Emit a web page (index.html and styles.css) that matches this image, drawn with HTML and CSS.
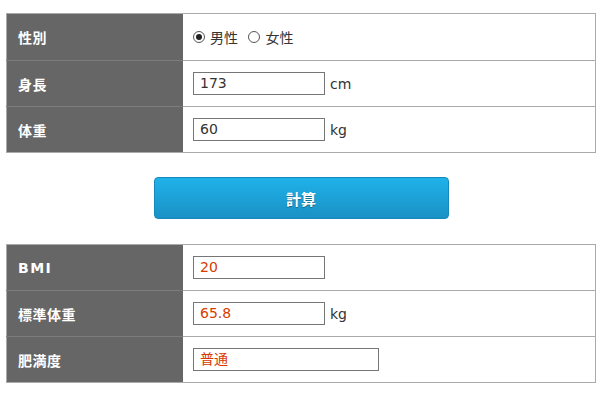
FILE: index.html
```html
<!DOCTYPE html>
<html lang="ja">
<head>
    <meta charset="UTF-8">
    <meta name="viewport" content="width=device-width, initial-scale=1.0">
    <title>BMI計算</title>
    <link rel="stylesheet" href="styles.css">
</head>
<body>

<div class="bmi-container">
    <table class="bmi-table input-table">
        <tr>
            <th>性別</th>
            <td>
                <label class="radio"><span class="radio-mark checked"></span>男性</label>
                <label class="radio"><span class="radio-mark"></span>女性</label>
            </td>
        </tr>
        <tr>
            <th>身長</th>
            <td><span class="field">173</span><span class="unit">cm</span></td>
        </tr>
        <tr>
            <th>体重</th>
            <td><span class="field">60</span><span class="unit">kg</span></td>
        </tr>
    </table>

    <div class="btn-row">
        <button class="calc-btn">計算</button>
    </div>

    <table class="bmi-table">
        <tr>
            <th class="latin">BMI</th>
            <td><span class="field result">20</span></td>
        </tr>
        <tr>
            <th>標準体重</th>
            <td><span class="field result">65.8</span><span class="unit">kg</span></td>
        </tr>
        <tr>
            <th>肥満度</th>
            <td><span class="field result wide">普通</span></td>
        </tr>
    </table>
</div>

</body>
</html>
```

FILE: styles.css
```css
body {
    margin: 0;
    font-family: "DejaVu Sans", "Noto Sans CJK JP", sans-serif;
    font-size: 14px;
    color: #333;
    background-color: #fff;
}

.bmi-container {
    width: 590px;
    padding: 13px 6px;
}

.bmi-table {
    width: 100%;
    border-collapse: collapse;
    border: 1px solid #aaa;
}

.bmi-table th {
    width: 165px;
    height: 45px;
    padding: 0 0 0 11px;
    background-color: #666;
    color: #fff;
    font-size: 14px;
    font-weight: bold;
    letter-spacing: 0.5px;
    text-align: left;
    border-top: 1px solid #7c7c7c;
}

.bmi-table tr:first-child th {
    border-top: 1px solid #aaa;
}

.input-table tr:first-child th {
    height: 46px;
}

.bmi-table th.latin {
    letter-spacing: 1.5px;
}

.bmi-table td {
    padding: 0 0 0 10px;
    border-top: 1px solid #aaa;
}

.field {
    display: inline-block;
    box-sizing: border-box;
    width: 132px;
    height: 23px;
    padding: 0 6px;
    line-height: 21px;
    border: 1px solid #767676;
    vertical-align: middle;
    color: #333;
}

.field.result {
    color: #d83b00;
}

.field.wide {
    width: 186px;
}

.unit {
    margin-left: 5px;
    vertical-align: middle;
}

.radio {
    display: inline-flex;
    align-items: center;
    margin-right: 6px;
}

.radio-mark {
    box-sizing: border-box;
    width: 12px;
    height: 12px;
    margin-right: 5px;
    border: 1px solid #555;
    border-radius: 50%;
    position: relative;
}

.radio-mark.checked::after {
    content: "";
    position: absolute;
    left: 2px;
    top: 2px;
    width: 6px;
    height: 6px;
    border-radius: 50%;
    background-color: #222;
}

.btn-row {
    display: flex;
    justify-content: center;
    margin: 24px 0 25px;
}

.calc-btn {
    width: 295px;
    height: 42px;
    border: 1px solid #1588be;
    border-radius: 4px;
    background: linear-gradient(#1fb2ea, #1a91c4);
    color: #fff;
    font-family: "DejaVu Sans", "Noto Sans CJK JP", sans-serif;
    font-size: 15px;
    font-weight: bold;
    text-shadow: 0 1px 1px rgba(0, 0, 0, 0.35);
    cursor: pointer;
}
```
